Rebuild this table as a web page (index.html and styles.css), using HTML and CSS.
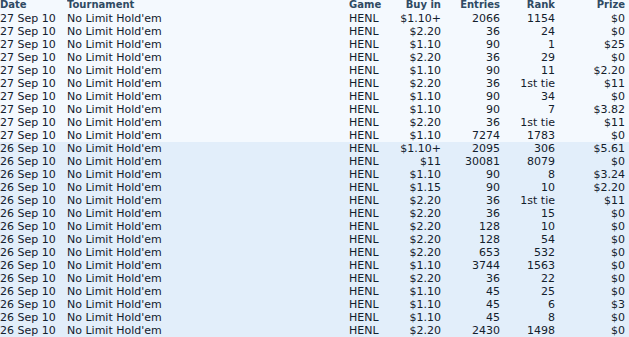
FILE: index.html
```html
<!DOCTYPE html>
<html>
<head>
<meta charset="utf-8">
<link rel="stylesheet" href="styles.css">
</head>
<body>
<table class="results">
<thead>
<tr><th class="l">Date</th><th class="l">Tournament</th><th class="l">Game</th><th class="r">Buy in</th><th class="r">Entries</th><th class="r">Rank</th><th class="r last">Prize</th></tr>
</thead>
<tbody class="g1">
<tr><td>27 Sep 10</td><td>No Limit Hold'em</td><td>HENL</td><td class="r">$1.10+</td><td class="r">2066</td><td class="r">1154</td><td class="r last">$0</td></tr>
<tr><td>27 Sep 10</td><td>No Limit Hold'em</td><td>HENL</td><td class="r">$2.20</td><td class="r">36</td><td class="r">24</td><td class="r last">$0</td></tr>
<tr><td>27 Sep 10</td><td>No Limit Hold'em</td><td>HENL</td><td class="r">$1.10</td><td class="r">90</td><td class="r">1</td><td class="r last">$25</td></tr>
<tr><td>27 Sep 10</td><td>No Limit Hold'em</td><td>HENL</td><td class="r">$2.20</td><td class="r">36</td><td class="r">29</td><td class="r last">$0</td></tr>
<tr><td>27 Sep 10</td><td>No Limit Hold'em</td><td>HENL</td><td class="r">$1.10</td><td class="r">90</td><td class="r">11</td><td class="r last">$2.20</td></tr>
<tr><td>27 Sep 10</td><td>No Limit Hold'em</td><td>HENL</td><td class="r">$2.20</td><td class="r">36</td><td class="r">1st tie</td><td class="r last">$11</td></tr>
<tr><td>27 Sep 10</td><td>No Limit Hold'em</td><td>HENL</td><td class="r">$1.10</td><td class="r">90</td><td class="r">34</td><td class="r last">$0</td></tr>
<tr><td>27 Sep 10</td><td>No Limit Hold'em</td><td>HENL</td><td class="r">$1.10</td><td class="r">90</td><td class="r">7</td><td class="r last">$3.82</td></tr>
<tr><td>27 Sep 10</td><td>No Limit Hold'em</td><td>HENL</td><td class="r">$2.20</td><td class="r">36</td><td class="r">1st tie</td><td class="r last">$11</td></tr>
<tr><td>27 Sep 10</td><td>No Limit Hold'em</td><td>HENL</td><td class="r">$1.10</td><td class="r">7274</td><td class="r">1783</td><td class="r last">$0</td></tr>
</tbody>
<tbody class="g2">
<tr><td>26 Sep 10</td><td>No Limit Hold'em</td><td>HENL</td><td class="r">$1.10+</td><td class="r">2095</td><td class="r">306</td><td class="r last">$5.61</td></tr>
<tr><td>26 Sep 10</td><td>No Limit Hold'em</td><td>HENL</td><td class="r">$11</td><td class="r">30081</td><td class="r">8079</td><td class="r last">$0</td></tr>
<tr><td>26 Sep 10</td><td>No Limit Hold'em</td><td>HENL</td><td class="r">$1.10</td><td class="r">90</td><td class="r">8</td><td class="r last">$3.24</td></tr>
<tr><td>26 Sep 10</td><td>No Limit Hold'em</td><td>HENL</td><td class="r">$1.15</td><td class="r">90</td><td class="r">10</td><td class="r last">$2.20</td></tr>
<tr><td>26 Sep 10</td><td>No Limit Hold'em</td><td>HENL</td><td class="r">$2.20</td><td class="r">36</td><td class="r">1st tie</td><td class="r last">$11</td></tr>
<tr><td>26 Sep 10</td><td>No Limit Hold'em</td><td>HENL</td><td class="r">$2.20</td><td class="r">36</td><td class="r">15</td><td class="r last">$0</td></tr>
<tr><td>26 Sep 10</td><td>No Limit Hold'em</td><td>HENL</td><td class="r">$2.20</td><td class="r">128</td><td class="r">10</td><td class="r last">$0</td></tr>
<tr><td>26 Sep 10</td><td>No Limit Hold'em</td><td>HENL</td><td class="r">$2.20</td><td class="r">128</td><td class="r">54</td><td class="r last">$0</td></tr>
<tr><td>26 Sep 10</td><td>No Limit Hold'em</td><td>HENL</td><td class="r">$2.20</td><td class="r">653</td><td class="r">532</td><td class="r last">$0</td></tr>
<tr><td>26 Sep 10</td><td>No Limit Hold'em</td><td>HENL</td><td class="r">$1.10</td><td class="r">3744</td><td class="r">1563</td><td class="r last">$0</td></tr>
<tr><td>26 Sep 10</td><td>No Limit Hold'em</td><td>HENL</td><td class="r">$2.20</td><td class="r">36</td><td class="r">22</td><td class="r last">$0</td></tr>
<tr><td>26 Sep 10</td><td>No Limit Hold'em</td><td>HENL</td><td class="r">$1.10</td><td class="r">45</td><td class="r">25</td><td class="r last">$0</td></tr>
<tr><td>26 Sep 10</td><td>No Limit Hold'em</td><td>HENL</td><td class="r">$1.10</td><td class="r">45</td><td class="r">6</td><td class="r last">$3</td></tr>
<tr><td>26 Sep 10</td><td>No Limit Hold'em</td><td>HENL</td><td class="r">$1.10</td><td class="r">45</td><td class="r">8</td><td class="r last">$0</td></tr>
<tr><td>26 Sep 10</td><td>No Limit Hold'em</td><td>HENL</td><td class="r">$2.20</td><td class="r">2430</td><td class="r">1498</td><td class="r last">$0</td></tr>
</tbody>
</table>
</body>
</html>
```
FILE: styles.css
```css
html, body {
  margin: 0;
  padding: 0;
  background: #f4f9fe;
}
.results {
  display: block;
  width: 629px;
  font-family: "DejaVu Sans", Verdana, sans-serif;
  font-size: 11px;
  color: #13202c;
}
.results thead,
.results tbody {
  display: block;
}
.results tr {
  display: grid;
  grid-template-columns: 67px 282px 50px 42px 59px 55px 74px;
}
.results th,
.results td {
  display: block;
  padding: 0;
  white-space: nowrap;
  overflow: hidden;
  text-align: left;
}
.results th {
  font-size: 10px;
  font-weight: bold;
  color: #2f4a63;
  height: 12px;
  line-height: 10px;
}
.results td {
  height: 13px;
  line-height: 13px;
}
.results .l { text-align: left; }
.results .r { text-align: right; }
.results .last { padding-right: 4px; }
.g1 tr { background: #f4f9fe; }
.g2 tr { background: #e2eefa; }
```
